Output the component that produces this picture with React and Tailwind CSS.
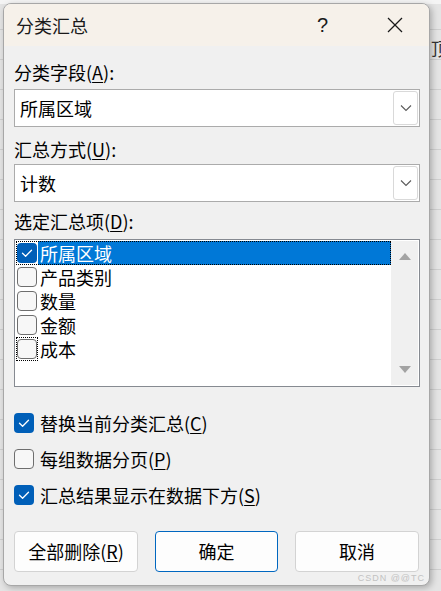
import React from "react";

const FONT = { fontFamily: '"Noto Sans CJK SC", "Noto Sans", sans-serif' };

function Check({ size = 20 }) {
  return (
    <svg width={size} height={size} viewBox="0 0 20 20" className="block">
      <polyline points="5.5,10.2 8.6,13.2 14.5,7.2" fill="none" stroke="white" strokeWidth="1.3" strokeLinecap="round" strokeLinejoin="round" />
    </svg>
  );
}

function Box({ checked }) {
  return checked ? (
    <div className="w-[20px] h-[20px] rounded-[4px] bg-[#005fb8] flex items-center justify-center shrink-0">
      <Check />
    </div>
  ) : (
    <div className="w-[20px] h-[20px] rounded-[4px] border border-[#6e6e6e] bg-[#f7f7f7] shrink-0" />
  );
}

function Chevron() {
  return (
    <svg width="12" height="8" viewBox="0 0 12 8" className="block">
      <polyline points="1,1.5 6,6.5 11,1.5" fill="none" stroke="#5a5a5a" strokeWidth="1.1" />
    </svg>
  );
}

function Combo({ value }) {
  return (
    <div className="h-[38px] w-[406px] bg-white border border-[#ababab] flex items-center p-[1px]">
      <div className="flex-1 pl-[4px] text-[18px] leading-[24px] text-black">{value}</div>
      <div className="w-[25px] h-full border border-[#d9d9d9] rounded-[3px] flex items-center justify-center bg-white">
        <Chevron />
      </div>
    </div>
  );
}

function ListRow({ label, selected, focusBox }) {
  return (
    <div className={"h-[24px] flex items-center " + (selected ? "outline outline-1 outline-dotted outline-black -outline-offset-1" : "")}>
      <div className={"w-[22px] h-[24px] flex items-center justify-center shrink-0 " + (focusBox ? "outline outline-1 outline-dotted outline-black -outline-offset-1" : "")}>
        <Box checked={selected} />
      </div>
      <div className={"flex-1 h-full pl-[2px] text-[18px] leading-[24px] " + (selected ? "bg-[#0078d7] text-white" : "text-black")}>
        {label}
      </div>
    </div>
  );
}

function Btn({ children, primary }) {
  return (
    <div
      className={
        "h-[41px] flex items-center justify-center rounded-[4px] bg-[#fdfdfd] text-[18px] text-black border " +
        (primary ? "border-[#0067c0] w-[123px]" : "border-[#d3d3d3] w-[124px]")
      }
    >
      {children}
    </div>
  );
}

export default function App() {
  return (
    <div
      style={FONT}
      className="w-[441px] h-[591px] relative overflow-hidden bg-[#e4e4e4] bg-[repeating-linear-gradient(to_bottom,#e4e4e4_0px,#e4e4e4_29px,#cfcfcf_29px,#cfcfcf_30px)]"
    >
      <div className="absolute left-0 top-0 w-[441px] h-[4px] bg-[#f4f4f4]" />
      <div className="absolute left-[431px] top-[38px] text-[18px] leading-[20px] text-[#333]">顶</div>
      <div className="ml-[3px] mt-[3px] w-[427px] h-[583px] rounded-[8px] border border-[#a7a7a7] bg-[#f0f0f0] shadow-[2px_2px_6px_rgba(0,0,0,0.25)] overflow-hidden flex flex-col relative">
        {/* title bar */}
        <div className="h-[42px] bg-[#f6f1ea] flex items-center pl-[12px] shrink-0">
          <div className="flex-1 text-[18px] leading-[24px] text-[#1a1a1a]">分类汇总</div>
          <div className="w-[20px] text-[20px] leading-[24px] text-[#1a1a1a] font-light mr-[50px]" style={{ fontFamily: '"Liberation Sans", sans-serif' }}>?</div>
          <div className="mr-[26px]">
            <svg width="16" height="16" viewBox="0 0 16 16" className="block">
              <line x1="1" y1="1" x2="15" y2="15" stroke="#1a1a1a" strokeWidth="1.3" />
              <line x1="15" y1="1" x2="1" y2="15" stroke="#1a1a1a" strokeWidth="1.3" />
            </svg>
          </div>
        </div>

        {/* body */}
        <div className="pl-[10px] flex flex-col">
          <div className="pt-[14px] h-[43px] text-[18px] leading-[24px] text-black">
            分类字段(<span className="underline underline-offset-2">A</span>):
          </div>
          <Combo value="所属区域" />
          <div className="pt-[10px] h-[37px] text-[18px] leading-[24px] text-black">
            汇总方式(<span className="underline underline-offset-2">U</span>):
          </div>
          <Combo value="计数" />
          <div className="pt-[7px] h-[37px] text-[18px] leading-[24px] text-black">
            选定汇总项(<span className="underline underline-offset-2">D</span>):
          </div>
          <div className="w-[406px] h-[148px] bg-white border border-[#868a91] flex p-[1px]">
            <div className="flex-1 flex flex-col">
              <ListRow label="所属区域" selected />
              <ListRow label="产品类别" />
              <ListRow label="数量" />
              <ListRow label="金额" />
              <ListRow label="成本" focusBox />
            </div>
            <div className="w-[27px] h-full bg-[#f0f0f0] flex flex-col items-center justify-between py-[12px]">
              <svg width="12" height="7" viewBox="0 0 12 7" className="block">
                <polygon points="6,0 12,7 0,7" fill="#a3a3a3" />
              </svg>
              <svg width="12" height="7" viewBox="0 0 12 7" className="block">
                <polygon points="0,0 12,0 6,7" fill="#a3a3a3" />
              </svg>
            </div>
          </div>

          <div className="mt-[18px] flex flex-col">
            <div className="h-[36px] flex items-center gap-[6px] text-[18px] text-black">
              <Box checked />
              <span>替换当前分类汇总(<span className="underline underline-offset-2">C</span>)</span>
            </div>
            <div className="h-[36px] flex items-center gap-[6px] text-[18px] text-black">
              <Box />
              <span>每组数据分页(<span className="underline underline-offset-2">P</span>)</span>
            </div>
            <div className="h-[36px] flex items-center gap-[6px] text-[18px] text-black">
              <Box checked />
              <span>汇总结果显示在数据下方(<span className="underline underline-offset-2">S</span>)</span>
            </div>
          </div>

          <div className="mt-[18px] flex gap-[17px]">
            <Btn>全部删除(<span className="underline underline-offset-2">R</span>)</Btn>
            <Btn primary>确定</Btn>
            <Btn>取消</Btn>
          </div>
        </div>
        <div className="absolute right-[4px] bottom-[1px] text-[9px] leading-[12px] tracking-[1px] text-[#c2c2c2]" style={{ fontFamily: '"Liberation Sans", sans-serif' }}>
          CSDN @@TC
        </div>
      </div>
    </div>
  );
}
